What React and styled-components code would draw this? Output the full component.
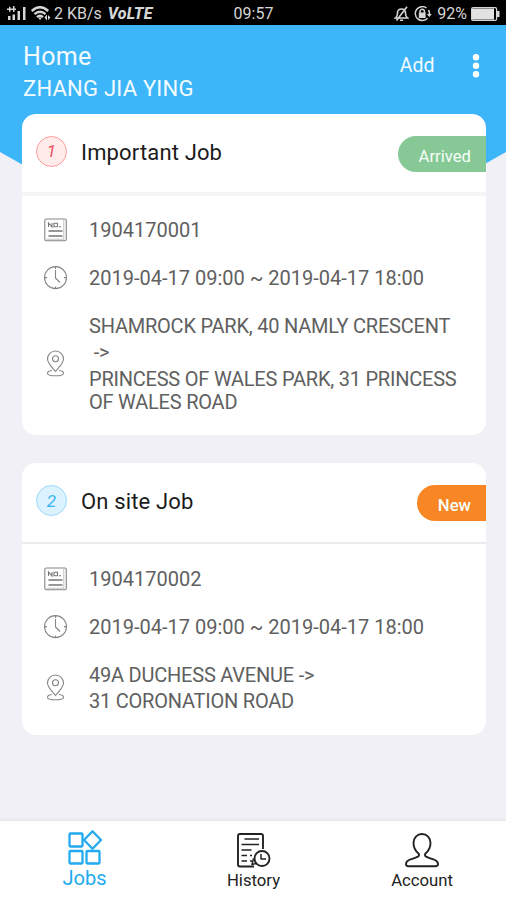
import React from 'react'
import styled, { createGlobalStyle } from 'styled-components'

const GlobalStyle = createGlobalStyle`
    * {
        box-sizing: border-box;
    }
    body {
        margin: 0;
        background: #f1f0f6;
        font-family: Roboto, "Noto Sans", sans-serif;
    }
`

const Screen = styled.div`
    position: relative;
    display: flex;
    flex-direction: column;
    width: 506px;
    height: 900px;
    overflow: hidden;
    background: #f1f0f6;
`

const Backdrop = styled.div`
    position: absolute;
    top: 25px;
    left: 0;
    width: 100%;
    height: 270px;
    background: #3cb5f9;
    clip-path: polygon(0 0, 100% 0, 100% 127px, 50% 100%, 0 127px);
`

const StatusBar = styled.div`
    position: relative;
    display: grid;
    grid-template-columns: 1fr auto 1fr;
    align-items: center;
    height: 25px;
    padding: 2px 6px 0 7px;
    background: #000;
    color: #d6d6d6;
    font-size: 16px;
    line-height: 22px;
    white-space: nowrap;
`

const StatusGroup = styled.div`
    display: flex;
    align-items: center;
    justify-content: ${props => props.$end ? 'flex-end' : 'flex-start'};
`

const StatusText = styled.span`
    margin: 0 ${props => props.$right || 0}px 0 ${props => props.$left || 0}px;
`

const Volte = styled.span`
    margin-left: 6px;
    font-size: 16px;
    font-weight: 800;
    font-style: italic;
    letter-spacing: 0.2px;
`

const StatusIcon = styled.svg`
    flex: none;
    margin-right: ${props => props.$right || 0}px;
`

const Header = styled.header`
    position: relative;
    display: flex;
    align-items: center;
    height: 89px;
    padding: 0 26.5px 7px 23px;
    color: #f4fbff;
`

const Titles = styled.div`
    flex: 1;
    padding-top: 13.5px;
`

const PageTitle = styled.h1`
    margin: 0;
    font-size: 25px;
    font-weight: 400;
    line-height: 32px;
    letter-spacing: 0.35px;
`

const UserName = styled.div`
    font-size: 22px;
    line-height: 32px;
    letter-spacing: 0.22px;
`

const AddButton = styled.button`
    margin: 0 37px 0 0;
    padding: 0;
    border: 0;
    background: none;
    color: inherit;
    font: 400 19.5px/24px Roboto, sans-serif;
`

const Main = styled.main`
    position: relative;
    display: flex;
    flex: 1;
    flex-direction: column;
    gap: 28px;
    padding: 0 20px 0 22px;
`

const Card = styled.section`
    overflow: hidden;
    border-radius: 14px;
    background: #fff;
`

const CardHead = styled.div`
    display: flex;
    align-items: flex-start;
    height: ${props => props.$slim ? 81 : 82}px;
    padding-left: 14px;
    border-bottom: ${props => props.$slim ? '2px solid #ececf0' : '4px solid #f5f5f7'};
`

const Number = styled.span`
    display: flex;
    align-items: center;
    justify-content: center;
    width: 31px;
    height: 31px;
    margin-top: ${props => props.$slim ? 22 : 21.5}px;
    border: 1.5px solid ${props => props.$line};
    border-radius: 50%;
    background: ${props => props.$fill};
    color: ${props => props.$ink};
    font-size: 17px;
    font-style: italic;
`

const CardTitle = styled.h2`
    flex: 1;
    margin: 22.5px 0 0 14px;
    font-size: 22px;
    font-weight: 400;
    line-height: 32px;
    letter-spacing: 0.15px;
    color: #1b1b1b;
`

const Badge = styled.span`
    height: 36.5px;
    margin-top: 21.5px;
    padding: 3px 15px 0 21px;
    border-radius: 18px 0 0 18px;
    background: ${props => props.$color};
    color: #f6fff8;
    font-size: 16.7px;
    font-weight: ${props => props.$weight};
    line-height: 35px;
`

const CardBody = styled.div`
    padding: ${props => props.$slim ? '11px 22px 22px' : '10px 22px 21.5px'};
`

const Row = styled.div`
    display: flex;
    align-items: center;
    height: 48px;
    color: #606060;
    font-size: 20px;
    white-space: pre;
`

const AddressRow = styled(Row)`
    height: auto;
    margin-top: 12.5px;
    letter-spacing: -0.22px;
`

const RowIcon = styled.svg`
    flex: none;
    width: 24px;
    height: 28px;
    margin-right: 21px;
    fill: none;
    stroke: #858585;
    stroke-width: 1.1;
`

const Address = styled.div`
    display: flex;
    flex-direction: column;
    gap: 3.5px;
    line-height: 23px;
`

const NavBar = styled.nav`
    position: relative;
    display: grid;
    grid-template-columns: 169px 169px 168px;
    height: 79px;
    background: #fff;
    box-shadow: 0 -1px 3px rgba(0, 0, 0, .08);
`

const NavItem = styled.a`
    display: flex;
    flex-direction: column;
    align-items: center;
    padding-top: ${props => props.$active ? 8 : 11}px;
    color: ${props => props.$active ? '#22aaee' : '#222'};
    font-size: ${props => props.$active ? 20 : 16.7}px;
    line-height: ${props => props.$active ? 24 : 23}px;
`

const NavIcon = styled.svg`
    width: 36px;
    height: 36px;
    margin-bottom: 1px;
    fill: none;
    stroke: currentColor;
    stroke-linejoin: round;
`

const jobs = [
    {
        number: '1',
        title: 'Important Job',
        colors: { line: '#ff9c9c', fill: '#ffecea', ink: '#f05060' },
        status: 'Arrived',
        statusColor: '#86c896',
        statusWeight: 400,
        jobNo: '1904170001',
        time: '2019-04-17 09:00 ~ 2019-04-17 18:00',
        address: ['SHAMROCK PARK, 40 NAMLY CRESCENT', ' ->', 'PRINCESS OF WALES PARK, 31 PRINCESS\nOF WALES ROAD'],
    },
    {
        number: '2',
        title: 'On site Job',
        slim: true,
        colors: { line: '#98d8fb', fill: '#dcf2fe', ink: '#3bb4f2' },
        status: 'New',
        statusColor: '#f98625',
        statusWeight: 500,
        jobNo: '1904170002',
        time: '2019-04-17 09:00 ~ 2019-04-17 18:00',
        address: ['49A DUCHESS AVENUE ->', '31 CORONATION ROAD'],
    },
]

const SignalIcon = () => (
    <StatusIcon width="20" height="15" viewBox="0 0 20 15" $right={4} fill="#d6d6d6">
        <path d="M0 2.500h9v1.500H0zM2 .8h1.500v5H2zM6 0h1.500v6H6zM1 10h2.500v4H1zM5.500 8.500H8V14H5.500zM10.500 5H13v9h-2.500zM16 1h2.500v13H16z" />
    </StatusIcon>
)

const WifiIcon = () => (
    <StatusIcon width="20" height="15" viewBox="0 0 20 15" fill="none" stroke="#d6d6d6" strokeWidth="2.4">
        <path d="M.8 5Q9 -2.500 17.200 5M3.500 8.200Q9 3.200 14.500 8.200M6 11.200Q9 8.200 12 11.200" />
        <path d="M7 11.500L9 14l2-2.500z" fill="#d6d6d6" stroke="none" />
        <path d="M13.500 11.500l2.500-3v6zM17 9l2.500 2.500L17 14z" fill="#d6d6d6" stroke="none" />
    </StatusIcon>
)

const MuteIcon = () => (
    <StatusIcon width="15" height="16" viewBox="0 0 15 16" $right={5} fill="none" stroke="#d6d6d6" strokeWidth="1.6">
        <path d="M1.500 12c1.500-1 2-2 2-5 0-2.500 1.500-4 4-4s4 1.500 4 4c0 3 .5 4 2 5zM6 14.300h3M13 .8L2.500 14.500" />
    </StatusIcon>
)

const LockIcon = () => (
    <StatusIcon width="18" height="16" viewBox="0 0 18 16" $right={5} fill="none" stroke="#d6d6d6" strokeWidth="1.5">
        <path d="M12.500 2A7 7 0 1 0 13.500 12.300M15 10a7 7 0 0 0-.5-6" />
        <path d="M6 7V5.500a2.200 2.200 0 0 1 4.400 0V7" />
        <path d="M4.800 6.500h6.800V12H4.800zM12.800 8h5l-2.500 3z" fill="#d6d6d6" stroke="none" />
    </StatusIcon>
)

const BatteryIcon = () => (
    <StatusIcon width="29" height="14" viewBox="0 0 29 14">
        <rect x=".6" y=".6" width="25" height="12.800" rx="1.500" fill="none" stroke="#d6d6d6" strokeWidth="1.200" />
        <rect x="1" y="1.500" width="22" height="11" fill="#e2e2e2" />
        <path d="M26 4h2.500v6H26z" fill="#d6d6d6" />
    </StatusIcon>
)

const MoreIcon = () => (
    <svg width="8" height="26" viewBox="0 0 8 26" fill="#fff">
        <circle cx="4" cy="4.300" r="3.200" />
        <circle cx="4" cy="12.800" r="3.200" />
        <circle cx="4" cy="21.300" r="3.200" />
    </svg>
)

const DocIcon = () => (
    <RowIcon viewBox="0 0 24 28">
        <rect x=".8" y="3" width="21.500" height="21.800" rx="1.500" />
        <path d="M19.800 3.500v19.800H2.500" stroke="#c4c4c4" />
        <path d="M4.500 15h14M4.500 20h14" stroke="#777" strokeWidth="1.300" />
        <path d="M4.500 11V7l3.500 4V7M10 7.300h3.500v3.400H10zM15 10.800h2" stroke="#777" />
    </RowIcon>
)

const ClockIcon = () => (
    <RowIcon viewBox="0 0 24 28">
        <circle cx="11.500" cy="13.600" r="11" />
        <path d="M11.500 6v8l4.500 4.500M11.500 3v2M11.500 22.500v2M.5 13.600h2.500M20 13.600h2.500" />
    </RowIcon>
)

const PinIcon = () => (
    <RowIcon viewBox="0 0 24 28">
        <path d="M11.500 21.500C7 16 3.500 13 3.500 9a8 8 0 0 1 16 0c0 4-3.500 7-8 12.500z" />
        <circle cx="11.500" cy="8.800" r="3" />
        <path d="M8 20.500c-2.500.3-4.500 1-4.500 2.700 0 2 3 2.600 8 2.600s8-.6 8-2.600c0-1.700-2-2.400-4.500-2.700" />
    </RowIcon>
)

const JobsIcon = () => (
    <NavIcon viewBox="0 0 36 36" strokeWidth="2.300">
        <rect x="2.500" y="4.500" width="13" height="13" rx="1" />
        <rect x="2.500" y="22" width="13" height="12.500" rx="1" />
        <rect x="19.500" y="22" width="13" height="12.500" rx="1" />
        <path d="M25.500 2.300l8.500 8.700-8.500 8.700-8.500-8.700z" />
    </NavIcon>
)

const HistoryIcon = () => (
    <NavIcon viewBox="0 0 36 36" strokeWidth="1.900">
        <path d="M18 34.500H4a2 2 0 0 1-2-2V4a2 2 0 0 1 2-2h21a2 2 0 0 1 2 2v13" />
        <path d="M8.500 7H23M5.500 12.500H23M5.500 18h10M5.500 23.500H11M14 23.500h2M5.500 29H11M14 29h2" strokeWidth="1.500" />
        <circle cx="26" cy="26.500" r="7.500" />
        <path d="M25 22v5h5M17.500 26.500l-1.500 6 4-1" strokeWidth="1.500" />
    </NavIcon>
)

const AccountIcon = () => (
    <NavIcon viewBox="0 0 36 36" strokeWidth="1.900">
        <path d="M18 2c-5 0-8.500 4-8.500 9 0 4 2 8 5 10.500.8.700.7 2.300-.2 2.900-2.300 1.600-6 2.200-9.300 3.600C3 29 2 30.500 2 32c0 1.500.8 2.200 2.500 2.200h27c1.700 0 2.500-.7 2.500-2.200 0-1.500-1-3-3-4-3.300-1.400-7-2-9.300-3.600-.9-.6-1-2.200-.2-2.900 3-2.500 5-6.500 5-10.500 0-5-3.500-9-8.500-9z" />
    </NavIcon>
)

function JobCard({ job }) {
    return (
        <Card>
            <CardHead $slim={job.slim}>
                <Number $slim={job.slim} $line={job.colors.line} $fill={job.colors.fill} $ink={job.colors.ink}>{job.number}</Number>
                <CardTitle>{job.title}</CardTitle>
                <Badge $color={job.statusColor} $weight={job.statusWeight}>{job.status}</Badge>
            </CardHead>
            <CardBody $slim={job.slim}>
                <Row><DocIcon />{job.jobNo}</Row>
                <Row><ClockIcon />{job.time}</Row>
                <AddressRow>
                    <PinIcon />
                    <Address>
                        {job.address.map(line => <div key={line}>{line}</div>)}
                    </Address>
                </AddressRow>
            </CardBody>
        </Card>
    )
}

class App extends React.Component {
    render() {
        return (
            <Screen>
                <GlobalStyle />
                <Backdrop />
                <StatusBar>
                    <StatusGroup>
                        <SignalIcon />
                        <WifiIcon />
                        <StatusText $left={3}>2 KB/s</StatusText>
                        <Volte>VoLTE</Volte>
                    </StatusGroup>
                    <StatusText>09:57</StatusText>
                    <StatusGroup $end>
                        <MuteIcon />
                        <LockIcon />
                        <StatusText $right={4}>92%</StatusText>
                        <BatteryIcon />
                    </StatusGroup>
                </StatusBar>
                <Header>
                    <Titles>
                        <PageTitle>Home</PageTitle>
                        <UserName>ZHANG JIA YING</UserName>
                    </Titles>
                    <AddButton>Add</AddButton>
                    <MoreIcon />
                </Header>
                <Main>
                    {jobs.map(job => <JobCard key={job.jobNo} job={job} />)}
                </Main>
                <NavBar>
                    <NavItem $active><JobsIcon />Jobs</NavItem>
                    <NavItem><HistoryIcon />History</NavItem>
                    <NavItem><AccountIcon />Account</NavItem>
                </NavBar>
            </Screen>
        )
    }
}

export default App
